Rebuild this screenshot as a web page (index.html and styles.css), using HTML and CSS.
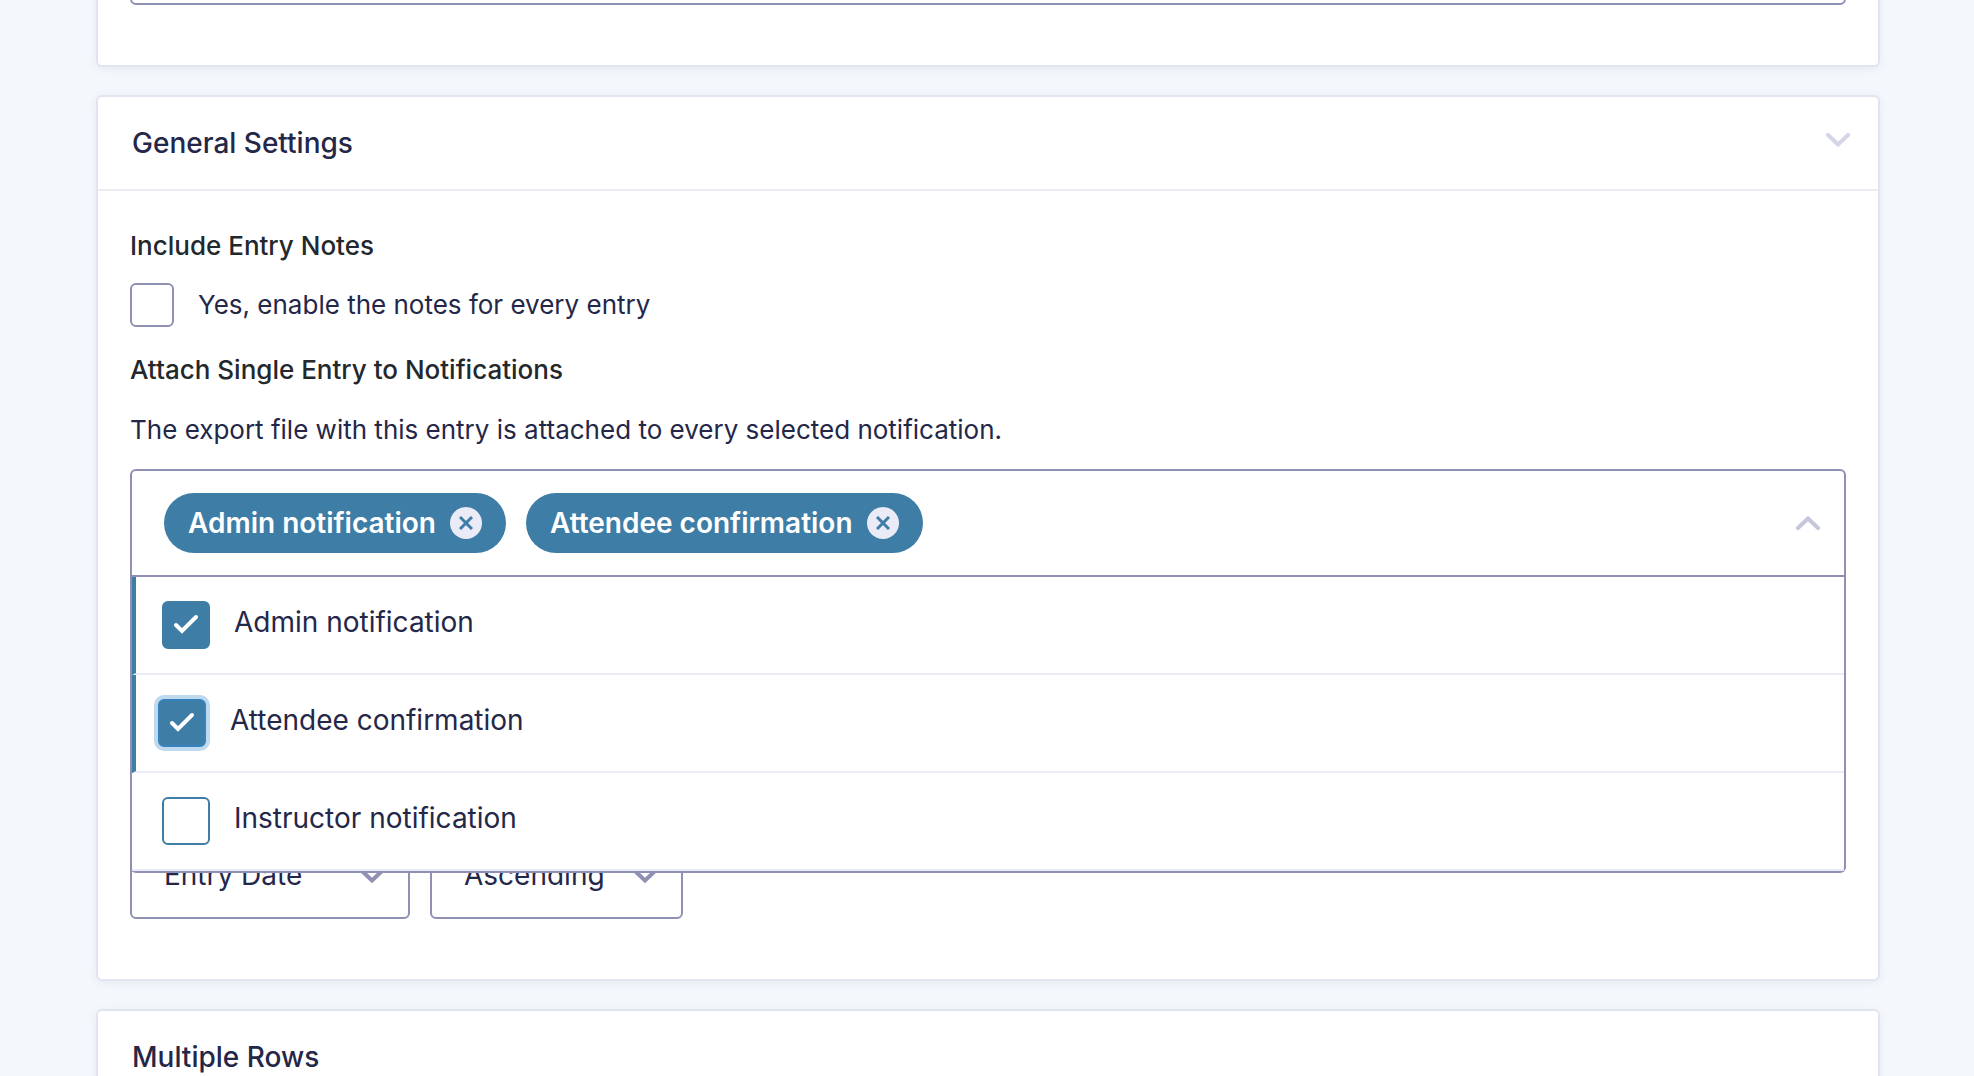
FILE: index.html
```
<!DOCTYPE html>
<html lang="en">

<head>
	<meta charset="UTF-8">
	<meta name="viewport" content="width=device-width, initial-scale=1.0">
	<title>Export Settings</title>
	<link rel="stylesheet" href="styles.css">
</head>

<body>
	<main class="page">
		<section class="card">
			<div class="card-body first">
				<input type="text" class="text-input" aria-label="File name">
			</div>
		</section>

		<section class="card">
			<header class="card-header">
				<h2>General Settings</h2>
				<button type="button" class="icon-button toggle" aria-label="Collapse General Settings">
					<svg class="chevron" viewBox="0 0 24 14"><path d="M2 2l10 9.500L22 2" /></svg>
				</button>
			</header>

			<div class="card-body">
				<h3>Include Entry Notes</h3>
				<div class="check-line">
					<input type="checkbox" id="notes" class="notes-box">
					<label for="notes">Yes, enable the notes for every entry</label>
				</div>

				<h3>Attach Single Entry to Notifications</h3>
				<p>The export file with this entry is attached to every selected notification.</p>

				<div class="multiselect">
					<div class="multiselect-field">
						<span class="tag">
							Admin notification
							<button type="button" class="remove" aria-label="Remove Admin notification">
								<svg viewBox="0 0 14 14"><path d="M1 1l12 12M13 1L1 13" /></svg>
							</button>
						</span>
						<span class="tag">
							Attendee confirmation
							<button type="button" class="remove" aria-label="Remove Attendee confirmation">
								<svg viewBox="0 0 14 14"><path d="M1 1l12 12M13 1L1 13" /></svg>
							</button>
						</span>
						<button type="button" class="icon-button open" aria-label="Close the list">
							<svg class="chevron" viewBox="0 0 24 14"><path d="M2 12l10-9.500L22 12" /></svg>
						</button>
					</div>

					<!-- Open list of notifications, lies over the sort fields -->
					<div class="menu">
						<label class="option selected">
							<span class="box">
								<input type="checkbox" checked>
								<svg viewBox="0 0 48 48"><path d="M14 24l6 6 14-14" /></svg>
							</span>
							Admin notification
						</label>
						<label class="option selected focused">
							<span class="box">
								<input type="checkbox" checked>
								<svg viewBox="0 0 48 48"><path d="M14 24l6 6 14-14" /></svg>
							</span>
							Attendee confirmation
						</label>
						<label class="option">
							<span class="box">
								<input type="checkbox">
							</span>
							Instructor notification
						</label>
					</div>
				</div>

				<div class="sort">
					<div class="select">
						<select aria-label="Sort field">
							<option>Entry Date</option>
						</select>
						<svg class="chevron" viewBox="0 0 24 14"><path d="M2 2l10 9.500L22 2" /></svg>
					</div>
					<div class="select">
						<select aria-label="Sort direction">
							<option>Ascending</option>
						</select>
						<svg class="chevron" viewBox="0 0 24 14"><path d="M2 2l10 9.500L22 2" /></svg>
					</div>
				</div>
			</div>
		</section>

		<section class="card">
			<header class="card-header">
				<h2>Multiple Rows</h2>
			</header>
		</section>
	</main>
</body>

</html>
```

FILE: styles.css
```
* {
	box-sizing: border-box;
}

body {
	font-family: Inter, "Liberation Sans", sans-serif;
	font-size: 26px;
	line-height: 34px;
	color: #242748;
	background-color: #f4f8fc;
	margin: 0;
	height: 100vh;
	overflow: hidden;
}

.page {
	display: flex;
	flex-direction: column;
	gap: 28px;
	margin: -85px 94px 0 96px;
}

.card {
	background-color: #fff;
	border: 2px solid #e2e4ef;
	border-radius: 6px;
	box-shadow: 0 2px 8px rgba(56, 62, 120, 0.08);
}

.card-header {
	display: flex;
	justify-content: space-between;
	align-items: center;
	height: 94px;
	padding: 0 28px 0 34px;
	border-bottom: 2px solid #ebebf2;
}

.card-body {
	padding: 38px 32px 60px;
}

.card-body.first {
	padding-top: 0;
}

h2 {
	font-size: 28px;
	font-weight: 500;
	margin: 0;
}

h3 {
	font-size: 26px;
	font-weight: 500;
	color: #23282d;
	margin: 0;
}

p {
	margin: 26px 0 22px;
}

.text-input {
	display: block;
	width: 100%;
	height: 88px;
	border: 2px solid #8f90b3;
	border-radius: 6px;
}

.icon-button {
	padding: 0;
	border: none;
	background: none;
	cursor: pointer;
}

.chevron {
	display: block;
	width: 24px;
	height: 14px;
	fill: none;
	stroke: currentColor;
	stroke-width: 4;
	stroke-linecap: round;
}

.toggle {
	color: #d5d5e8;
	margin-bottom: 6px;
}

.check-line {
	display: flex;
	align-items: center;
	gap: 24px;
	margin: 20px 0 26px;
}

.notes-box {
	appearance: none;
	width: 44px;
	height: 44px;
	margin: 0;
	border: 2px solid #8f90b3;
	border-radius: 6px;
}

.multiselect {
	position: relative;
	font-size: 28px;
}

.multiselect-field {
	display: flex;
	align-items: center;
	gap: 20px;
	padding: 22px 24px 22px 32px;
	border: 2px solid #8f90b3;
	border-radius: 6px 6px 0 0;
}

.tag {
	display: flex;
	align-items: center;
	gap: 14px;
	height: 60px;
	padding: 0 24px;
	border-radius: 30px;
	font-weight: 600;
	color: #fff;
	background-color: #3e7da6;
}

.remove {
	display: grid;
	place-items: center;
	width: 32px;
	height: 32px;
	padding: 0;
	border: none;
	border-radius: 50%;
	background-color: #ebebf7;
	cursor: pointer;
}

.remove svg {
	width: 14px;
	height: 14px;
	stroke: #3e7da6;
	stroke-width: 3;
}

.open {
	margin-left: auto;
	color: #c5c6dc;
}

.menu {
	position: absolute;
	top: 100%;
	left: 0;
	right: 0;
	z-index: 1;
	background-color: #fff;
	border: 2px solid #8f90b3;
	border-top: none;
	border-radius: 0 0 6px 6px;
}

.option {
	display: flex;
	gap: 24px;
	padding: 24px 30px;
	border-bottom: 2px solid #ebebf7;
	line-height: 42px;
	cursor: pointer;
}

.option.selected {
	padding-left: 26px;
	border-left: 4px solid #3e7da6;
}

.option.focused {
	padding-left: 22px;
}

.box {
	display: grid;
	width: 48px;
	height: 48px;
}

.box input,
.box svg {
	grid-area: 1 / 1;
	width: 48px;
	height: 48px;
	margin: 0;
}

.box input {
	appearance: none;
	border: 2px solid #3e7da6;
	border-radius: 6px;
}

.box input:checked {
	background-color: #3e7da6;
}

.focused .box input {
	border-color: #3582bd;
	box-shadow: 0 0 0 4px #bfd9ee;
}

.box svg {
	fill: none;
	stroke: #fff;
	stroke-width: 4;
	stroke-linecap: round;
	pointer-events: none;
}

.sort {
	display: flex;
	gap: 20px;
	margin-top: 254px;
	font-size: 28px;
}

.select {
	position: relative;
	color: #8f90b3;
}

.select select {
	appearance: none;
	display: block;
	height: 88px;
	padding: 0 105px 0 32px;
	border: 2px solid #8f90b3;
	border-radius: 6px;
	font: inherit;
	color: #242748;
	background-color: #fff;
}

.select + .select select {
	padding-right: 76px;
}

.select .chevron {
	position: absolute;
	right: 26px;
	top: 38px;
	pointer-events: none;
}
```
